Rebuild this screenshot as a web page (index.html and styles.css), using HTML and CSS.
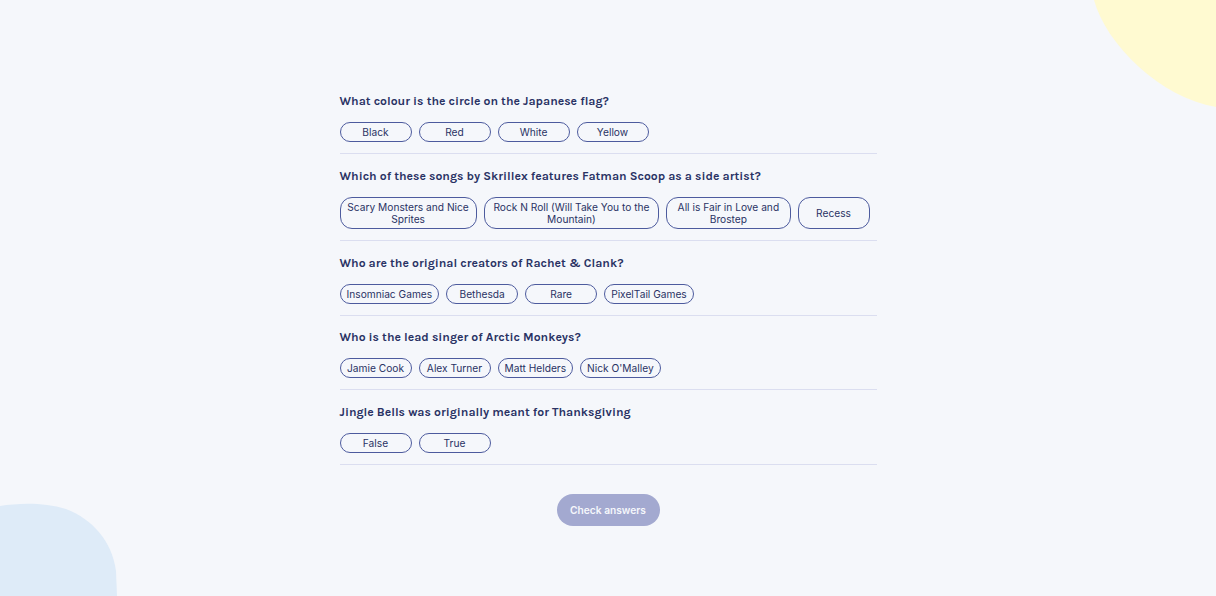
FILE: index.html
```html
<!DOCTYPE html>
<html lang="en">
<head>
<meta charset="utf-8">
<title>Quizzical</title>
<link rel="stylesheet" href="styles.css">
</head>
<body>
<svg class="blob blob-yellow" width="122" height="110" viewBox="0 0 122 110" aria-hidden="true">
  <path d="M0 0 C6 22 22 46 45 67 C67 87 94 102 122 107 L122 0 Z" fill="#FFFAD1"/>
</svg>
<svg class="blob blob-blue" width="120" height="93" viewBox="0 0 120 93" aria-hidden="true">
  <path d="M0 3 C18 0 44 -1 66 6 C92 16 112 38 116 68 L117 93 L0 93 Z" fill="#DEEBF8"/>
</svg>
<main class="quiz">
  <section class="question">
    <h2 class="q-title">What colour is the circle on the Japanese flag?</h2>
    <div class="answers">
      <button class="answer">Black</button>
      <button class="answer">Red</button>
      <button class="answer">White</button>
      <button class="answer">Yellow</button>
    </div>
  </section>
  <section class="question">
    <h2 class="q-title">Which of these songs by Skrillex features Fatman Scoop as a side artist?</h2>
    <div class="answers">
      <button class="answer">Scary Monsters and Nice Sprites</button>
      <button class="answer">Rock N Roll (Will Take You to the Mountain)</button>
      <button class="answer">All is Fair in Love and Brostep</button>
      <button class="answer">Recess</button>
    </div>
  </section>
  <section class="question">
    <h2 class="q-title">Who are the original creators of Rachet &amp; Clank?</h2>
    <div class="answers">
      <button class="answer">Insomniac Games</button>
      <button class="answer">Bethesda</button>
      <button class="answer">Rare</button>
      <button class="answer">PixelTail Games</button>
    </div>
  </section>
  <section class="question">
    <h2 class="q-title">Who is the lead singer of Arctic Monkeys?</h2>
    <div class="answers">
      <button class="answer">Jamie Cook</button>
      <button class="answer">Alex Turner</button>
      <button class="answer">Matt Helders</button>
      <button class="answer">Nick O'Malley</button>
    </div>
  </section>
  <section class="question">
    <h2 class="q-title">Jingle Bells was originally meant for Thanksgiving</h2>
    <div class="answers">
      <button class="answer">False</button>
      <button class="answer">True</button>
    </div>
  </section>
  <div class="actions">
    <button class="check" disabled>Check answers</button>
  </div>
</main>
</body>
</html>
```

FILE: styles.css
```css
* { box-sizing: border-box; }
html, body { height: 100%; }
body {
  margin: 0;
  background: #F5F7FB;
  color: #293264;
  font-family: Inter, "Liberation Sans", sans-serif;
  overflow: hidden;
}
.blob { position: absolute; display: block; }
.blob-yellow { top: 0; right: 0; }
.blob-blue { bottom: 0; left: 0; }

.quiz {
  position: relative;
  width: 537px;
  margin: 0 auto;
  padding-top: 93px;
}
.question {
  border-bottom: 1px solid #DBDEF0;
  padding: 0 0 11px;
  margin-bottom: 13.8px;
}
.q-title {
  margin: 0 0 12px;
  font-family: Karla, Inter, "Liberation Sans", sans-serif;
  font-weight: 700;
  font-size: 12.2px;
  line-height: 17px;
  color: #293264;
}
.answers {
  display: flex;
}
.answer {
  min-width: 72px;
  min-height: 20px;
  margin-right: 7px;
  padding: 3px 6px;
  border: 1px solid #4D5B9E;
  border-radius: 12px;
  background: transparent;
  color: #293264;
  font-family: Inter, "Liberation Sans", sans-serif;
  font-size: 10.2px;
  line-height: 12px;
  text-align: center;
}
.actions {
  display: flex;
  justify-content: center;
  padding-top: 14.8px;
}
.check {
  width: 103px;
  height: 32px;
  border: none;
  border-radius: 16px;
  background: #A3A9D0;
  color: #F5F7FB;
  font-family: Inter, "Liberation Sans", sans-serif;
  font-weight: 600;
  font-size: 10.2px;
}
```
